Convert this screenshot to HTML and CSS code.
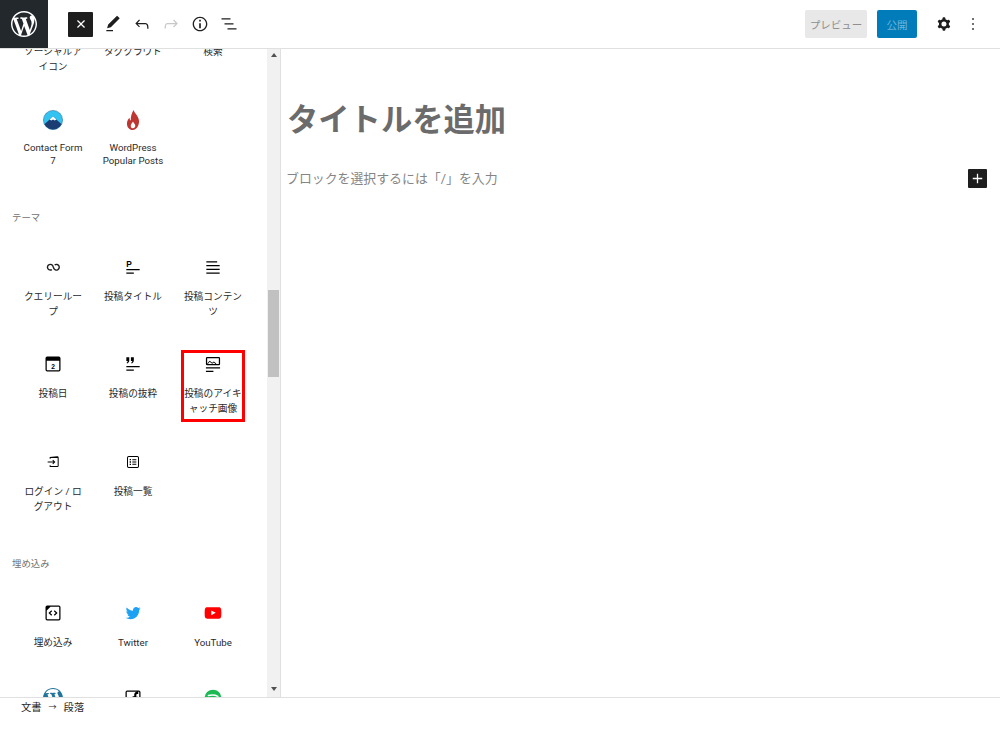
FILE: index.html
```html
<!DOCTYPE html>
<html lang="ja">
<head>
<meta charset="utf-8">
<title>投稿を編集</title>
<link rel="stylesheet" href="styles.css">
</head>
<body>
<div class="page">
  <header class="topbar">
    <div class="wp-logo">
      <svg viewBox="0 0 20 20" width="26" height="26" fill="#fff"><path d="M20 10c0-5.51-4.49-10-10-10C4.48 0 0 4.49 0 10c0 5.52 4.48 10 10 10 5.51 0 10-4.48 10-10zM7.78 15.37L4.37 6.22c.55-.02 1.17-.08 1.17-.08.5-.06.44-1.13-.06-1.11 0 0-1.45.11-2.37.11-.18 0-.37 0-.58-.01C4.12 2.69 6.87 1.11 10 1.11c2.33 0 4.45.87 6.05 2.34-.68-.11-1.65.39-1.65 1.58 0 .74.45 1.36.9 2.1.35.61.55 1.36.55 2.46 0 1.49-1.4 5-1.4 5l-3.03-8.37c.54-.02.82-.17.82-.17.5-.05.44-1.25-.06-1.22 0 0-1.44.12-2.38.12-.87 0-2.33-.12-2.33-.12-.5-.03-.56 1.2-.06 1.22l.92.08 1.26 3.41zM17.41 10c.24-.64.74-1.87.43-4.25.7 1.29 1.05 2.71 1.05 4.25 0 3.29-1.73 6.24-4.4 7.78.97-2.59 1.94-5.2 2.92-7.78zM6.1 18.09C3.12 16.65 1.11 13.53 1.11 10c0-1.3.23-2.48.72-3.59C3.25 10.3 4.67 14.2 6.1 18.09zm4.03-6.63l2.58 6.98c-.86.29-1.76.45-2.71.45-.79 0-1.57-.11-2.29-.33.81-2.38 1.62-4.74 2.42-7.1z"/></svg>
    </div>
    <div class="close-btn">
      <svg viewBox="0 0 24 24" width="20" height="20" fill="#fff"><path d="M12 13.06l3.712 3.713 1.061-1.06L13.061 12l3.712-3.712-1.06-1.06L12 10.938 8.288 7.227l-1.061 1.06L10.939 12l-3.712 3.712 1.06 1.061L12 13.061z"/></svg>
    </div>
    <div class="tools">
      <span class="tool"><svg viewBox="0 0 24 24" width="20" height="20"><path d="M20.1 5.1L16.9 2 6.2 12.7l-1.3 4.4 4.5-1.3L20.1 5.1zM4 20.8h8v-1.5H4v1.5z"/></svg></span>
      <span class="tool"><svg viewBox="0 0 24 24" width="20" height="20"><path d="M18.3 11.7c-.6-.6-1.4-.9-2.3-.9H6.7l2.9-3.3-1.1-1-4.5 5L8.5 16l1-1-2.7-2.7H16c.5 0 .9.2 1.3.5 1 1 1 3.4 1 4.5v.3h1.5v-.2c0-1.5 0-4.3-1.5-5.7z"/></svg></span>
      <span class="tool tool-off"><svg viewBox="0 0 24 24" width="20" height="20"><path d="M15.6 6.5l-1.1 1 2.9 3.3H8c-.9 0-1.7.3-2.3.9-1.4 1.5-1.4 4.2-1.4 5.6v.2h1.5v-.3c0-1.1 0-3.5 1-4.5.3-.3.7-.5 1.3-.5h9.2L14.5 15l1.1 1.1 4.6-4.6-4.6-5z"/></svg></span>
      <span class="tool"><svg viewBox="0 0 24 24" width="20" height="20"><path d="M12 3.2c-4.8 0-8.8 3.9-8.8 8.8 0 4.8 3.9 8.8 8.8 8.8 4.8 0 8.8-3.9 8.8-8.8 0-4.8-4-8.8-8.8-8.8zm0 16c-4 0-7.2-3.3-7.2-7.2C4.8 8 8 4.8 12 4.8s7.2 3.3 7.2 7.2c0 4-3.2 7.2-7.2 7.2zM11 17h2v-6h-2v6zm0-8h2V7h-2v2z"/></svg></span>
      <span class="tool"><svg viewBox="0 0 24 24" width="20" height="20"><path d="M13.8 5.2H3v1.5h10.8V5.2zm-3.6 12v1.5H21v-1.5H10.2zm7.2-6H6.6v1.5h10.8v-1.5z"/></svg></span>
    </div>
    <div class="actions">
      <span class="btn-preview">プレビュー</span>
      <span class="btn-publish">公開</span>
      <span class="action-icon"><svg viewBox="0 0 24 24" width="20" height="20"><path fill-rule="evenodd" d="M10.289 4.836A1 1 0 0111.275 4h1.306a1 1 0 01.987.836l.244 1.466c.787.26 1.503.679 2.108 1.218l1.393-.522a1 1 0 011.216.437l.653 1.13a1 1 0 01-.23 1.273l-1.148.944a6.025 6.025 0 010 2.435l1.149.946a1 1 0 01.23 1.272l-.653 1.13a1 1 0 01-1.216.437l-1.394-.522c-.605.54-1.32.958-2.108 1.218l-.244 1.466a1 1 0 01-.987.836h-1.306a1 1 0 01-.986-.836l-.244-1.466a5.995 5.995 0 01-2.108-1.218l-1.394.522a1 1 0 01-1.217-.436l-.653-1.131a1 1 0 01.23-1.272l1.149-.946a6.026 6.026 0 010-2.435l-1.148-.944a1 1 0 01-.23-1.272l.653-1.131a1 1 0 011.217-.437l1.393.522a5.994 5.994 0 012.108-1.218l.244-1.466zM14.929 12a3 3 0 11-6 0 3 3 0 016 0z"/></svg></span>
      <span class="action-icon"><svg viewBox="0 0 24 24" width="20" height="20"><path d="M13 19h-2v-2h2v2zm0-6h-2v-2h2v2zm0-6h-2V5h2v2z"/></svg></span>
    </div>
  </header>

  <main class="workspace">
    <aside class="inserter">
      <div class="inserter-list">
        <div class="block-grid">
          <div class="block">
            <span class="block-icon"></span>
            <span class="block-label">ソーシャルア<br>イコン</span>
          </div>
          <div class="block">
            <span class="block-icon"></span>
            <span class="block-label">タグクラウド</span>
          </div>
          <div class="block">
            <span class="block-icon"></span>
            <span class="block-label">検索</span>
          </div>
          <div class="block">
            <span class="block-icon"><svg viewBox="2 2 20 20" width="20" height="20"><defs><clipPath id="cf7"><circle cx="12" cy="12" r="9.6"/></clipPath></defs><g clip-path="url(#cf7)"><rect x="2" y="2" width="20" height="20" fill="#33c3f0"/><path d="M2 17.5L12 8.5l10 9V22H2z" fill="#1b3d73"/><path d="M8.6 11.6L12 8.5l3.4 3.1-1.7.9-1.7-1-1.7 1z" fill="#fff"/></g><circle cx="12" cy="12" r="9.6" fill="none" stroke="#1b5f8f" stroke-width=".5"/></svg></span>
            <span class="block-label label-latin">Contact Form 7</span>
          </div>
          <div class="block">
            <span class="block-icon"><svg viewBox="2 2 20 20" width="20" height="20"><path fill="#be3631" d="M12.6 2c.5 2.9 4.9 5.6 5.4 10.6.4 4.8-2.4 9.4-6.1 9.4-3.8 0-6.2-3.3-5.9-7.1.2-2.3 1.3-3.9 2.5-5.2.1 1.3.5 2.3 1.3 2.9C9.5 8.6 10.8 5 12.6 2zM12 13.5c-1 1.7-2.5 3-2.2 4.9.2 1.2 1.1 1.9 2.2 1.9 1.3 0 2.2-1 2.3-2.2.1-1.8-1.5-2.9-2.3-4.6z"/></svg></span>
            <span class="block-label label-latin">WordPress Popular Posts</span>
          </div>
        </div>

        <h2 class="section-title section-first">テーマ</h2>
        <div class="block-grid">
          <div class="block">
            <span class="block-icon"><svg viewBox="0 0 24 24" width="20" height="20" fill="none" stroke="#1e1e1e" stroke-width="1.7"><path d="M10.6 15.1A3.4 3.4 0 1 1 12 11.2l.9 2.3a3.4 3.4 0 1 0 1.1-3.9"/></svg></span>
            <span class="block-label">クエリールー<br>プ</span>
          </div>
          <div class="block">
            <span class="block-icon"><svg viewBox="0 0 24 24" width="20" height="20"><text x="4" y="12" class="icon-letter">P</text><path d="M4 14.5h16V16H4zM4 18.5h9V20H4z"/></svg></span>
            <span class="block-label">投稿タイトル</span>
          </div>
          <div class="block">
            <span class="block-icon"><svg viewBox="0 0 24 24" width="20" height="20"><path d="M4 5h13v1.5H4zM4 9.5h16V11H4zM4 14h16v1.5H4zM4 18.5h16V20H4z"/></svg></span>
            <span class="block-label">投稿コンテン<br>ツ</span>
          </div>
          <div class="block">
            <span class="block-icon"><svg viewBox="0 0 24 24" width="20" height="20"><path fill-rule="evenodd" d="M5 3h14a2 2 0 0 1 2 2v14a2 2 0 0 1-2 2H5a2 2 0 0 1-2-2V5a2 2 0 0 1 2-2zm-.5 5v11c0 .3.2.5.5.5h14c.3 0 .5-.2.5-.5V8z"/><text x="12" y="18" text-anchor="middle" class="icon-digit">2</text></svg></span>
            <span class="block-label">投稿日</span>
          </div>
          <div class="block">
            <span class="block-icon"><svg viewBox="0 0 24 24" width="20" height="20"><path d="M4 14.5h16V16H4zM4 18.5h9V20H4zM4 4h3.5v3.5c0 2-1 3.3-2.6 4l-.6-1c.9-.5 1.3-1.1 1.4-2H4zM9.5 4H13v3.5c0 2-1 3.3-2.6 4l-.6-1c.9-.5 1.3-1.1 1.4-2H9.5z"/></svg></span>
            <span class="block-label">投稿の抜粋</span>
          </div>
          <div class="block highlighted">
            <span class="block-icon"><svg viewBox="0 -1 24 24" width="20" height="20"><path fill-rule="evenodd" d="M5 2.5h14A1.5 1.5 0 0 1 20.5 4v7a1.5 1.5 0 0 1-1.5 1.5H5A1.5 1.5 0 0 1 3.5 11V4A1.5 1.5 0 0 1 5 2.5zM5 4v7h14V4z"/><path d="M5 10.5l3-3.5 3 2.5 2-1.5 3 2.5-.6.8-2.4-2-2 1.5-3-2.5-2.2 2.6zM3.5 15h17v1.5h-17zM3.5 19h9v1.5h-9z"/></svg></span>
            <span class="block-label">投稿のアイキ<br>ャッチ画像</span>
          </div>
          <div class="block">
            <span class="block-icon"><svg viewBox="0 0 24 24" width="20" height="20"><g transform="translate(2.4 2.4) scale(.8)"><path d="M11 14.5l1.1 1 3.5-3.5-3.5-3.5-1.1 1 1.7 1.8H4v1.5h8.7zM7 4.5V7h1.5V6h10c.3 0 .5.2.5.5v11c0 .3-.2.5-.5.5h-10v-1H7v2.5h11.5a2 2 0 0 0 2-2v-12a2 2 0 0 0-2-2z"/></g></svg></span>
            <span class="block-label">ログイン / ロ<br>グアウト</span>
          </div>
          <div class="block">
            <span class="block-icon"><svg viewBox="0 0 24 24" width="20" height="20"><g transform="translate(2.4 2.4) scale(.8)"><path fill-rule="evenodd" d="M5.5 3h13A2.5 2.5 0 0 1 21 5.5v13a2.5 2.5 0 0 1-2.5 2.5h-13A2.5 2.5 0 0 1 3 18.5v-13A2.5 2.5 0 0 1 5.5 3zm0 1.5a1 1 0 0 0-1 1v13a1 1 0 0 0 1 1h13a1 1 0 0 0 1-1v-13a1 1 0 0 0-1-1z"/><path d="M7 7.5h2v2H7zM11 7.7h6v1.6h-6zM7 14.5h2v2H7zM11 14.7h6v1.6h-6zM7 11h2v2H7zM11 11.2h6v1.6h-6z"/></g></svg></span>
            <span class="block-label">投稿一覧</span>
          </div>
        </div>

        <h2 class="section-title section-embed">埋め込み</h2>
        <div class="block-grid embed-grid">
          <div class="block">
            <span class="block-icon"><svg viewBox="0 0 24 24" width="20" height="20"><path fill-rule="evenodd" d="M5 3h14a2 2 0 0 1 2 2v14a2 2 0 0 1-2 2H5a2 2 0 0 1-2-2V5a2 2 0 0 1 2-2zm4 1.5L4.5 9v10c0 .3.2.5.5.5h14c.3 0 .5-.2.5-.5V5c0-.3-.2-.5-.5-.5z"/><path d="M10 8.7l1 1.1L8.7 12l2.3 2.2-1 1.1L6.5 12zM14 8.7L13 9.8l2.3 2.2-2.3 2.2 1 1.1 3.5-3.3z"/></svg></span>
            <span class="block-label">埋め込み</span>
          </div>
          <div class="block">
            <span class="block-icon"><svg viewBox="0 0 24 24" width="20" height="20" fill="#1da1f2"><g transform="translate(1.2 1.2) scale(.9)"><path d="M22.23 5.924c-.736.326-1.527.547-2.357.646.847-.508 1.498-1.312 1.804-2.27-.793.47-1.67.812-2.606.996C18.325 4.498 17.258 4 16.078 4c-2.266 0-4.103 1.837-4.103 4.103 0 .322.036.635.106.935-3.41-.17-6.433-1.804-8.457-4.287-.353.607-.556 1.312-.556 2.064 0 1.424.724 2.68 1.825 3.415-.673-.022-1.305-.207-1.86-.514v.052c0 1.988 1.415 3.647 3.293 4.023-.344.095-.707.145-1.08.145-.265 0-.522-.026-.773-.074.522 1.63 2.038 2.817 3.833 2.85-1.404 1.1-3.174 1.757-5.096 1.757-.332 0-.66-.02-.98-.057 1.816 1.164 3.973 1.843 6.29 1.843 7.547 0 11.675-6.252 11.675-11.675 0-.178-.004-.355-.012-.53.802-.578 1.497-1.3 2.047-2.132z"/></g></svg></span>
            <span class="block-label">Twitter</span>
          </div>
          <div class="block">
            <span class="block-icon"><svg viewBox="0 0 24 24" width="20" height="20" fill="#f00"><path d="M21.8 8s-.195-1.377-.795-1.984c-.76-.797-1.613-.8-2.004-.847-2.798-.203-6.996-.203-6.996-.203h-.01s-4.197 0-6.996.202c-.39.046-1.242.05-2.003.846C2.395 6.623 2.2 8 2.2 8S2 9.62 2 11.24v1.517c0 1.618.2 3.237.2 3.237s.195 1.378.795 1.985c.76.797 1.76.77 2.205.855 1.6.153 6.8.2 6.8.2s4.203-.005 7-.208c.392-.047 1.244-.05 2.005-.847.6-.607.795-1.985.795-1.985s.2-1.618.2-3.237v-1.517C22 9.62 21.8 8 21.8 8zM9.935 14.595v-5.62l5.403 2.82-5.403 2.8z"/></svg></span>
            <span class="block-label">YouTube</span>
          </div>
          <div class="block">
            <span class="block-icon"><svg viewBox="0 0 20 20" width="20" height="20" fill="#21759b"><path d="M20 10c0-5.51-4.49-10-10-10C4.48 0 0 4.49 0 10c0 5.52 4.48 10 10 10 5.51 0 10-4.48 10-10zM7.78 15.37L4.37 6.22c.55-.02 1.17-.08 1.17-.08.5-.06.44-1.13-.06-1.11 0 0-1.45.11-2.37.11-.18 0-.37 0-.58-.01C4.12 2.69 6.87 1.11 10 1.11c2.33 0 4.45.87 6.05 2.34-.68-.11-1.65.39-1.65 1.58 0 .74.45 1.36.9 2.1.35.61.55 1.36.55 2.46 0 1.49-1.4 5-1.4 5l-3.03-8.37c.54-.02.82-.17.82-.17.5-.05.44-1.25-.06-1.22 0 0-1.44.12-2.38.12-.87 0-2.33-.12-2.33-.12-.5-.03-.56 1.2-.06 1.22l.92.08 1.26 3.41z"/></svg></span>
            <span class="block-label">WordPress</span>
          </div>
          <div class="block">
            <span class="block-icon"><svg viewBox="0 0 24 24" width="20" height="20"><path fill-rule="evenodd" d="M5 3h14a2 2 0 0 1 2 2v14a2 2 0 0 1-2 2H5a2 2 0 0 1-2-2V5a2 2 0 0 1 2-2zm0 1.5c-.3 0-.5.2-.5.5v14c0 .3.2.5.5.5h14c.3 0 .5-.2.5-.5V5c0-.3-.2-.5-.5-.5h-2c-2 0-3.5 1.5-3.5 3.5v2h-2V13h2v6.5h2V13h2l.3-2.5H16V8.5c0-.8.4-1.3 1.3-1.3h1V4.5z"/></svg></span>
            <span class="block-label">Facebook</span>
          </div>
          <div class="block">
            <span class="block-icon"><svg viewBox="0 0 24 24" width="20" height="20"><circle cx="12" cy="12" r="10" fill="#1db954"/><path d="M6.5 9c4-1.1 8-.8 11.3 1M7 12.3c3.5-.9 6.800-.6 9.600 1" fill="none" stroke="#fff" stroke-width="1.8" stroke-linecap="round"/></svg></span>
            <span class="block-label">Spotify</span>
          </div>
        </div>
      </div>
    </aside>
    <div class="scrollbar">
      <span class="arrow arrow-up"></span>
      <span class="thumb"></span>
      <span class="arrow arrow-down"></span>
    </div>
    <section class="editor">
      <h1 class="post-title">タイトルを追加</h1>
      <div class="paragraph-row">
        <p class="placeholder">ブロックを選択するには「/」を入力</p>
        <span class="add-block"><svg viewBox="0 0 24 24" width="19" height="19" fill="#fff"><path d="M18 11.2h-5.2V6h-1.6v5.2H6v1.6h5.2V18h1.6v-5.2H18z"/></svg></span>
      </div>
    </section>
  </main>

  <footer class="breadcrumb"><span>文書</span><span class="crumb-arrow">→</span><span>段落</span></footer>
</div>
</body>
</html>
```

FILE: styles.css
```css
*,
*::after {
  box-sizing: border-box;
}

html,
body {
  margin: 0;
  padding: 0;
  background: #fff;
}

body {
  font-family: Roboto, "Noto Sans CJK JP", sans-serif;
  color: #1e1e1e;
}

.page {
  width: 1000px;
  height: 742px;
  display: flex;
  flex-direction: column;
  overflow: hidden;
}

/* Top bar */
.topbar {
  flex: none;
  height: 49px;
  display: flex;
  align-items: center;
  border-bottom: 1px solid #e0e0e0;
  position: relative;
  z-index: 2;
  background: #fff;
}

.wp-logo {
  width: 48px;
  height: 48px;
  display: flex;
  align-items: center;
  justify-content: center;
  background: #23282d;
}

.close-btn {
  width: 25px;
  height: 25px;
  margin-left: 20px;
  display: flex;
  align-items: center;
  justify-content: center;
  background: #1e1e1e;
  border-radius: 1px;
}

.tools {
  display: flex;
  margin-left: 5px;
}

.tool {
  width: 29px;
  height: 24px;
  display: flex;
  align-items: center;
  justify-content: center;
}

.tool svg,
.action-icon svg {
  fill: #1e1e1e;
}

.tool-off svg {
  fill: #c8c8c8;
}

.actions {
  margin-left: auto;
  display: flex;
  align-items: center;
  padding-right: 17px;
}

.btn-preview,
.btn-publish {
  height: 28px;
  display: flex;
  align-items: center;
  justify-content: center;
  font-size: 10.5px;
  border-radius: 2px;
}

.btn-preview {
  width: 62px;
  background: #e8e8e8;
  color: #8f8f8f;
}

.btn-publish {
  width: 40px;
  margin-left: 10px;
  margin-right: 17px;
  background: #007cba;
  color: #6fb4d8;
}

.action-icon {
  width: 20px;
  height: 20px;
  display: flex;
}

.action-icon + .action-icon {
  margin-left: 9px;
}

/* Main area */
.workspace {
  flex: none;
  height: 648px;
  display: flex;
}

.inserter {
  flex: none;
  width: 267px;
  overflow: hidden;
}

.inserter-list {
  margin-top: -37px;
  padding-left: 13px;
}

.block-grid {
  display: grid;
  grid-template-columns: repeat(3, 80px);
}

.embed-grid {
  row-gap: 2.5px;
}

.block {
  position: relative;
  display: flex;
  flex-direction: column;
  align-items: center;
  padding-bottom: 35.5px;
}

.block-icon {
  width: 20px;
  height: 20px;
  display: flex;
  margin-bottom: 12px;
}

.block-icon svg {
  display: block;
}

.block-label {
  width: 64px;
  font-size: 9.7px;
  line-height: 15px;
  text-align: center;
  color: #2a2a2a;
}

.label-latin {
  line-height: 13px;
  margin-top: -1px;
  margin-bottom: 5px;
}

.highlighted::after {
  content: "";
  position: absolute;
  left: 8px;
  top: -4px;
  width: 64px;
  height: 72px;
  border: 3px solid #f00;
}

.icon-letter {
  font: bold 10px "Liberation Sans", sans-serif;
}

.icon-digit {
  font: bold 8px "Liberation Sans", sans-serif;
}

.section-title {
  margin: 0;
  margin-left: -1px;
  font-size: 9.4px;
  font-weight: normal;
  line-height: 15px;
  color: #6f6f6f;
}

.section-first {
  padding-top: 3px;
  padding-bottom: 31.5px;
}

.section-embed {
  padding-top: 7px;
  padding-bottom: 31.5px;
}

/* Scrollbar */
.scrollbar {
  flex: none;
  width: 13px;
  display: flex;
  flex-direction: column;
  align-items: center;
  background: #f1f1f1;
}

.arrow {
  flex: none;
  width: 0;
  height: 0;
  border-left: 3.5px solid transparent;
  border-right: 3.5px solid transparent;
}

.arrow-up {
  margin-top: 4px;
  border-bottom: 4px solid #505050;
}

.arrow-down {
  margin-top: auto;
  margin-bottom: 6px;
  border-top: 4px solid #505050;
}

.thumb {
  flex: none;
  width: 11px;
  height: 87px;
  margin-top: 233px;
  background: #c1c1c1;
}

/* Editor */
.editor {
  flex: 1;
  border-left: 1px solid #e0e0e0;
  padding: 53px 13px 0 5px;
  min-width: 0;
}

.post-title {
  margin: 0 0 0 1px;
  font-size: 31.3px;
  line-height: 38px;
  font-weight: bold;
  color: #6b6b6b;
}

.paragraph-row {
  display: flex;
  align-items: center;
  justify-content: space-between;
  margin-top: 29px;
}

.placeholder {
  margin: 0;
  font-size: 12.9px;
  line-height: 19px;
  color: #858585;
}

.add-block {
  width: 19px;
  height: 19px;
  display: flex;
  background: #1e1e1e;
  border-radius: 1px;
}

/* Footer */
.breadcrumb {
  flex: 1;
  display: flex;
  align-items: flex-start;
  border-top: 1px solid #e0e0e0;
  padding: 2px 0 0 21px;
  font-size: 10.3px;
  line-height: 15px;
  color: #2a2a2a;
  background: #fff;
  position: relative;
  z-index: 2;
}

.crumb-arrow {
  width: 22px;
  text-align: center;
  font-size: 8px;
}
```
